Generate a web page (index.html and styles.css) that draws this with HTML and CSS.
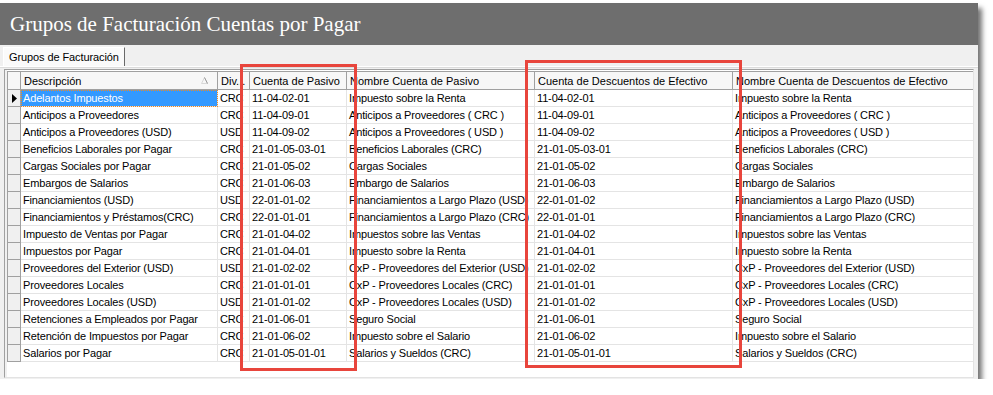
FILE: index.html
```html
<!DOCTYPE html>
<html lang="es">
<head>
  <meta charset="UTF-8">
  <title>Grupos de Facturación Cuentas por Pagar</title>
  <link rel="stylesheet" href="styles.css">
</head>
<body>
  <div class="window">
    <div class="titlebar">Grupos de Facturación Cuentas por Pagar</div>
    <div class="content">
      <div class="tabs">
        <div class="tab">Grupos de Facturación</div>
      </div>
      <div class="panel">
        <div class="grid">
          <table>
            <colgroup>
              <col class="c-ind">
              <col class="c-desc">
              <col class="c-div">
              <col class="c-pas">
              <col class="c-npas">
              <col class="c-dto">
              <col class="c-ndto">
            </colgroup>
            <thead>
              <tr>
                <th class="ind"></th>
                <th>Descripción
                  <svg class="sort" width="7" height="7" viewBox="0 0 7 7"><path d="M0.5 6.5 L3.5 0.5 L6.5 6.5 Z" fill="none" stroke="#d8d8d8"/><path d="M3.5 0.5 L6.5 6.5" stroke="#9a9a9a"/></svg>
                </th>
                <th>Div...</th>
                <th>Cuenta de Pasivo</th>
                <th>Nombre Cuenta de Pasivo</th>
                <th>Cuenta de Descuentos de Efectivo</th>
                <th>Nombre Cuenta de Descuentos de Efectivo</th>
              </tr>
            </thead>
            <tbody>
              <tr>
                <td class="ind"><svg width="5" height="9" viewBox="0 0 5 9"><path d="M0 0 L5 4.5 L0 9 Z" fill="#000"/></svg></td>
                <td class="sel">Adelantos Impuestos</td>
                <td>CRC</td><td>11-04-02-01</td><td>Impuesto sobre la Renta</td><td>11-04-02-01</td><td>Impuesto sobre la Renta</td>
              </tr>
              <tr>
                <td class="ind"></td><td>Anticipos a Proveedores</td>
                <td>CRC</td><td>11-04-09-01</td><td>Anticipos a Proveedores ( CRC )</td><td>11-04-09-01</td><td>Anticipos a Proveedores ( CRC )</td>
              </tr>
              <tr>
                <td class="ind"></td><td>Anticipos a Proveedores (USD)</td>
                <td>USD</td><td>11-04-09-02</td><td>Anticipos a Proveedores ( USD )</td><td>11-04-09-02</td><td>Anticipos a Proveedores ( USD )</td>
              </tr>
              <tr>
                <td class="ind"></td><td>Beneficios Laborales por Pagar</td>
                <td>CRC</td><td>21-01-05-03-01</td><td>Beneficios Laborales (CRC)</td><td>21-01-05-03-01</td><td>Beneficios Laborales (CRC)</td>
              </tr>
              <tr>
                <td class="ind"></td><td>Cargas Sociales por Pagar</td>
                <td>CRC</td><td>21-01-05-02</td><td>Cargas Sociales</td><td>21-01-05-02</td><td>Cargas Sociales</td>
              </tr>
              <tr>
                <td class="ind"></td><td>Embargos de Salarios</td>
                <td>CRC</td><td>21-01-06-03</td><td>Embargo de Salarios</td><td>21-01-06-03</td><td>Embargo de Salarios</td>
              </tr>
              <tr>
                <td class="ind"></td><td>Financiamientos (USD)</td>
                <td>USD</td><td>22-01-01-02</td><td>Financiamientos a Largo Plazo (USD)</td><td>22-01-01-02</td><td>Financiamientos a Largo Plazo (USD)</td>
              </tr>
              <tr>
                <td class="ind"></td><td>Financiamientos y Préstamos(CRC)</td>
                <td>CRC</td><td>22-01-01-01</td><td>Financiamientos a Largo Plazo (CRC)</td><td>22-01-01-01</td><td>Financiamientos a Largo Plazo (CRC)</td>
              </tr>
              <tr>
                <td class="ind"></td><td>Impuesto de Ventas por Pagar</td>
                <td>CRC</td><td>21-01-04-02</td><td>Impuestos sobre las Ventas</td><td>21-01-04-02</td><td>Impuestos sobre las Ventas</td>
              </tr>
              <tr>
                <td class="ind"></td><td>Impuestos por Pagar</td>
                <td>CRC</td><td>21-01-04-01</td><td>Impuesto sobre la Renta</td><td>21-01-04-01</td><td>Impuesto sobre la Renta</td>
              </tr>
              <tr>
                <td class="ind"></td><td>Proveedores del Exterior (USD)</td>
                <td>USD</td><td>21-01-02-02</td><td>CxP - Proveedores del Exterior (USD)</td><td>21-01-02-02</td><td>CxP - Proveedores del Exterior (USD)</td>
              </tr>
              <tr>
                <td class="ind"></td><td>Proveedores Locales</td>
                <td>CRC</td><td>21-01-01-01</td><td>CxP - Proveedores Locales (CRC)</td><td>21-01-01-01</td><td>CxP - Proveedores Locales (CRC)</td>
              </tr>
              <tr>
                <td class="ind"></td><td>Proveedores Locales (USD)</td>
                <td>USD</td><td>21-01-01-02</td><td>CxP - Proveedores Locales (USD)</td><td>21-01-01-02</td><td>CxP - Proveedores Locales (USD)</td>
              </tr>
              <tr>
                <td class="ind"></td><td>Retenciones a Empleados por Pagar</td>
                <td>CRC</td><td>21-01-06-01</td><td>Seguro Social</td><td>21-01-06-01</td><td>Seguro Social</td>
              </tr>
              <tr>
                <td class="ind"></td><td>Retención de Impuestos por Pagar</td>
                <td>CRC</td><td>21-01-06-02</td><td>Impuesto sobre el Salario</td><td>21-01-06-02</td><td>Impuesto sobre el Salario</td>
              </tr>
              <tr>
                <td class="ind"></td><td>Salarios por Pagar</td>
                <td>CRC</td><td>21-01-05-01-01</td><td>Salarios y Sueldos (CRC)</td><td>21-01-05-01-01</td><td>Salarios y Sueldos (CRC)</td>
              </tr>
            </tbody>
          </table>
        </div>
      </div>
    </div>
    <!-- recuadros rojos de resaltado -->
    <div class="mark mark-pasivo"></div>
    <div class="mark mark-dto"></div>
  </div>
</body>
</html>
```

FILE: styles.css
```css
body {
  margin: 0;
  background: #fff;
  font-family: "Liberation Sans", Arial, sans-serif;
  font-size: 11px;
  color: #000;
}
.window {
  position: relative;
  width: 978px;
  height: 376px;
  margin-top: 3px;
  box-shadow: 4px 5px 5px rgba(0, 0, 0, 0.55);
  background: #f0f0f0;
}
.titlebar {
  height: 42px;
  box-sizing: border-box;
  padding: 8px 0 0 10px;
  background: #6e6e6e;
  color: #fff;
  font-family: "Liberation Serif", "Times New Roman", serif;
  font-size: 21px;
  line-height: 26px;
}
.content {
  height: 334px;
  display: flex;
  flex-direction: column;
}
.tabs {
  height: 21px;
  display: flex;
  align-items: flex-end;
  padding-left: 3px;
}
.tab {
  height: 19px;
  box-sizing: border-box;
  padding: 2px 5px 0 5px;
  background: #fafafa;
  border-top: 1px solid #fff;
  border-left: 1px solid #fff;
  border-right: 1px solid #696969;
  line-height: 14px;
  letter-spacing: -0.1px;
}
.panel {
  flex: 1;
  border-top: 1px solid #fff;
  box-shadow: inset 0 1px 0 #dcdcdc;
  padding: 2px 4px 1px 4px;
}
.grid {
  height: 100%;
  box-sizing: border-box;
  border: 1px solid #a0a0a0;
  border-right-color: #e3e3e3;
  border-bottom-color: #e3e3e3;
  padding: 1px 0 0 2px;
  background: #fff;
  box-shadow: inset 2px 0 0 #f0f0f0;
  overflow: hidden;
}
table {
  border-collapse: collapse;
  table-layout: fixed;
  width: 966px;
}
.c-ind { width: 13px; }
.c-desc { width: 197px; }
.c-div { width: 32px; }
.c-pas { width: 97px; }
.c-npas { width: 188px; }
.c-dto { width: 198px; }
.c-ndto { width: 241px; }
th {
  position: relative;
  height: 17px;
  padding: 0 3px;
  background: #f7f7f7;
  border-top: 1px solid #a0a0a0;
  border-bottom: 1px solid #a0a0a0;
  border-right: 1px solid #a0a0a0;
  font-weight: normal;
  text-align: left;
  white-space: nowrap;
  overflow: hidden;
}
th.ind {
  border-left: 1px solid #a0a0a0;
}
.sort {
  position: absolute;
  right: 9px;
  top: 5px;
}
td {
  height: 16px;
  padding: 0 2px;
  border-right: 1px solid #e4e4e4;
  border-bottom: 1px solid #e4e4e4;
  white-space: nowrap;
  overflow: hidden;
  line-height: 15px;
  letter-spacing: -0.15px;
}
td.ind {
  padding: 0 0 0 4px;
  background: #f0f0f0;
  border: 1px solid #a0a0a0;
  border-top-color: #fff;
  line-height: 0;
}
td.sel {
  background: #3399ff;
  color: #fff;
  outline: 1px dotted #f08a24;
  outline-offset: -1px;
}
.mark {
  position: absolute;
  border: 3px solid #e8453c;
}
.mark-pasivo {
  left: 240px;
  top: 61px;
  width: 111px;
  height: 301px;
}
.mark-dto {
  left: 525px;
  top: 57px;
  width: 211px;
  height: 302px;
}
```
